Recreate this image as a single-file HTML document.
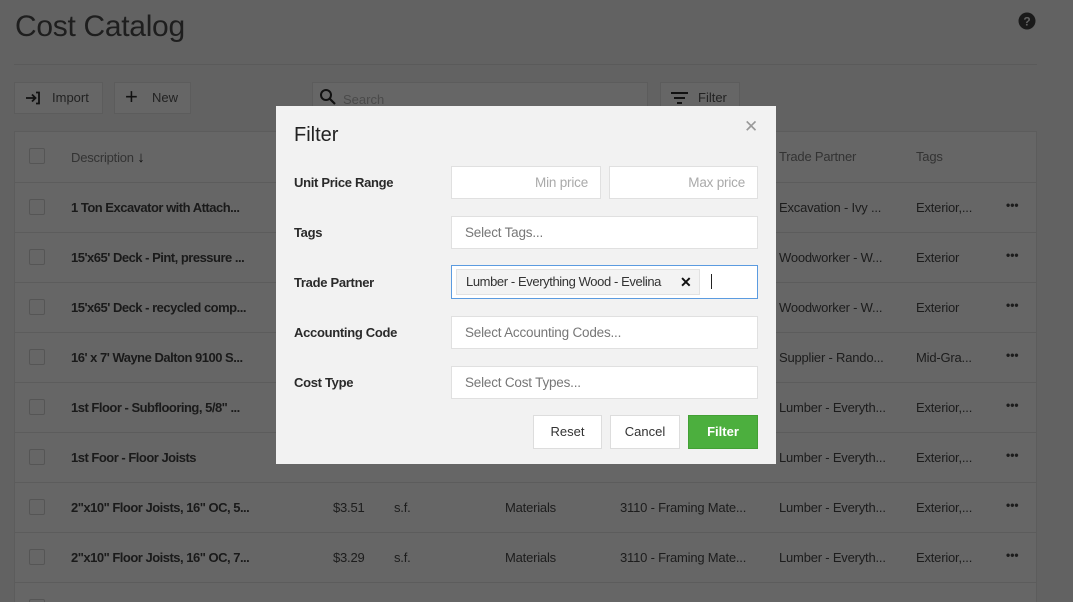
<!DOCTYPE html>
<html><head><meta charset="utf-8"><style>
*{box-sizing:border-box;margin:0;padding:0}
html,body{width:1073px;height:602px;overflow:hidden}
body{background:#626262;font-family:"Liberation Sans",sans-serif;position:relative;color:#1c1c1c}
.abs{position:absolute}
h1{position:absolute;left:15px;top:10px;font-size:30px;font-weight:normal;color:#1e1e1e;letter-spacing:-0.3px}
.hr{position:absolute;left:14px;top:64px;width:1023px;height:1px;background:#5a5a5a}
.btn{position:absolute;top:82px;height:32px;border:1px solid #5c5c5c;background:#666;font-size:13px;color:#222;line-height:30px}
.table{position:absolute;left:14px;top:131px;width:1023px;height:471px;background:#666;border:1px solid #5c5c5c;border-bottom:none;overflow:hidden}
.row{position:absolute;left:0;width:1021px;height:50px;border-bottom:1px solid #5c5c5c;font-size:13px;letter-spacing:-0.2px}
.row span{position:absolute;top:17px;white-space:nowrap}
.cb{position:absolute;left:14px;top:16px;width:16px;height:16px;border:1px solid #555;border-radius:2px}
.b{font-weight:bold;color:#1a1a1a;letter-spacing:-0.5px}
.d{left:991px;top:15px!important;font-weight:bold;font-size:12px;letter-spacing:0}
.modal{position:absolute;left:276px;top:106px;width:500px;height:358px;background:#f2f2f2}
.lbl{position:absolute;left:18px;font-size:13px;font-weight:bold;color:#2a2a2a;letter-spacing:-0.3px}
.inp{position:absolute;left:175px;width:307px;height:33px;background:#fff;border:1px solid #e0e0e0;font-size:13.5px;color:#777;padding-left:13px;line-height:31px;letter-spacing:-0.2px}
.mb{position:absolute;top:309px;height:34px;background:#fff;border:1px solid #ddd;font-size:13px;text-align:center;line-height:32px;color:#333}
</style></head><body>
<h1>Cost Catalog</h1>
<svg class="abs" style="left:1018px;top:12px" width="18" height="18" viewBox="0 0 18 18"><circle cx="9" cy="9" r="8.5" fill="#1a1a1a"/><text x="9" y="13.5" text-anchor="middle" font-size="12" font-weight="bold" fill="#626262" font-family="Liberation Sans">?</text></svg>
<div class="hr"></div>
<div class="btn" style="left:14px;width:89px"><svg class="abs" style="left:10px;top:8px" width="16" height="14" viewBox="0 0 16 14"><path d="M1 7h9M7 3.5l3.5 3.5L7 10.5M11 1.5h3v11h-3" fill="none" stroke="#111" stroke-width="1.8"/></svg><span style="position:absolute;left:37px">Import</span></div>
<div class="btn" style="left:114px;width:77px"><span style="position:absolute;left:10px;font-size:22px;top:-1px;color:#111">+</span><span style="position:absolute;left:37px">New</span></div>
<div class="btn" style="left:312px;width:336px;border-color:#5c5c5c"><svg class="abs" style="left:6px;top:5px" width="18" height="18" viewBox="0 0 18 18"><circle cx="7" cy="7" r="5" fill="none" stroke="#111" stroke-width="2"/><path d="M10.5 10.5L16 16" stroke="#111" stroke-width="2.2"/></svg><span style="position:absolute;left:30px;color:#4a4a4a;top:2px">Search</span></div>
<div class="btn" style="left:660px;width:80px"><svg class="abs" style="left:10px;top:9px" width="18" height="14" viewBox="0 0 18 14"><path d="M0 1h17M3 6h11M6 11h5" stroke="#111" stroke-width="2"/></svg><span style="position:absolute;left:37px">Filter</span></div>
<div class="table">
<div class="row" style="top:0;height:51px"><div class="cb"></div><span style="left:56px;top:17px;color:#333">Description <b style="font-size:15px;color:#111">↓</b></span><span style="left:764px;color:#333">Trade Partner</span><span style="left:901px;color:#333">Tags</span></div>
<div class="row" style="top:51px"><div class="cb"></div><span class="b" style="left:56px">1 Ton Excavator with Attach...</span><span style="left:764px">Excavation - Ivy ...</span><span style="left:901px">Exterior,...</span><span class="d">•••</span></div>
<div class="row" style="top:101px"><div class="cb"></div><span class="b" style="left:56px">15'x65' Deck - Pint, pressure ...</span><span style="left:764px">Woodworker - W...</span><span style="left:901px">Exterior</span><span class="d">•••</span></div>
<div class="row" style="top:151px"><div class="cb"></div><span class="b" style="left:56px">15'x65' Deck - recycled comp...</span><span style="left:764px">Woodworker - W...</span><span style="left:901px">Exterior</span><span class="d">•••</span></div>
<div class="row" style="top:201px"><div class="cb"></div><span class="b" style="left:56px">16' x 7' Wayne Dalton 9100 S...</span><span style="left:764px">Supplier - Rando...</span><span style="left:901px">Mid-Gra...</span><span class="d">•••</span></div>
<div class="row" style="top:251px"><div class="cb"></div><span class="b" style="left:56px">1st Floor - Subflooring, 5/8" ...</span><span style="left:764px">Lumber - Everyth...</span><span style="left:901px">Exterior,...</span><span class="d">•••</span></div>
<div class="row" style="top:301px"><div class="cb"></div><span class="b" style="left:56px">1st Foor - Floor Joists</span><span style="left:764px">Lumber - Everyth...</span><span style="left:901px">Exterior,...</span><span class="d">•••</span></div>
<div class="row" style="top:351px"><div class="cb"></div><span class="b" style="left:56px">2"x10" Floor Joists, 16" OC, 5...</span><span style="left:318px">$3.51</span><span style="left:379px">s.f.</span><span style="left:490px">Materials</span><span style="left:605px">3110 - Framing Mate...</span><span style="left:764px">Lumber - Everyth...</span><span style="left:901px">Exterior,...</span><span class="d">•••</span></div>
<div class="row" style="top:401px"><div class="cb"></div><span class="b" style="left:56px">2"x10" Floor Joists, 16" OC, 7...</span><span style="left:318px">$3.29</span><span style="left:379px">s.f.</span><span style="left:490px">Materials</span><span style="left:605px">3110 - Framing Mate...</span><span style="left:764px">Lumber - Everyth...</span><span style="left:901px">Exterior,...</span><span class="d">•••</span></div>
<div class="row" style="top:451px;height:20px;border-bottom:none"><div class="cb"></div></div>
</div>
<div class="modal">
<div class="abs" style="left:18px;top:18px;font-size:20px;color:#222">Filter</div>
<div class="abs" style="left:468px;top:11px;font-size:17px;color:#999">✕</div>
<div class="lbl" style="top:69px">Unit Price Range</div>
<div class="inp" style="top:60px;width:150px;text-align:right;padding-right:12px;color:#aaa">Min price</div>
<div class="inp" style="top:60px;left:333px;width:149px;text-align:right;padding-right:12px;color:#aaa">Max price</div>
<div class="lbl" style="top:119px">Tags</div>
<div class="inp" style="top:110px">Select Tags...</div>
<div class="lbl" style="top:169px">Trade Partner</div>
<div class="inp" style="top:159px;height:34px;border-color:#5b9be0;padding-left:4px"><div style="position:absolute;left:4px;top:3px;width:244px;height:26px;background:#f3f3f3;border:1px solid #e2e2e2;line-height:24px;padding-left:9px;color:#333;font-size:13px;letter-spacing:-0.4px">Lumber - Everything Wood - Evelina<span style="position:absolute;left:223px;font-weight:bold;color:#111;font-size:14px">✕</span></div><div style="position:absolute;left:259px;top:8px;width:1px;height:15px;background:#222"></div></div>
<div class="lbl" style="top:219px">Accounting Code</div>
<div class="inp" style="top:210px">Select Accounting Codes...</div>
<div class="lbl" style="top:269px">Cost Type</div>
<div class="inp" style="top:260px">Select Cost Types...</div>
<div class="mb" style="left:257px;width:69px">Reset</div>
<div class="mb" style="left:334px;width:70px">Cancel</div>
<div class="mb" style="left:412px;width:70px;background:#4caf3e;border-color:#43a035;color:#fff;font-weight:bold">Filter</div>
</div>
</body></html>
